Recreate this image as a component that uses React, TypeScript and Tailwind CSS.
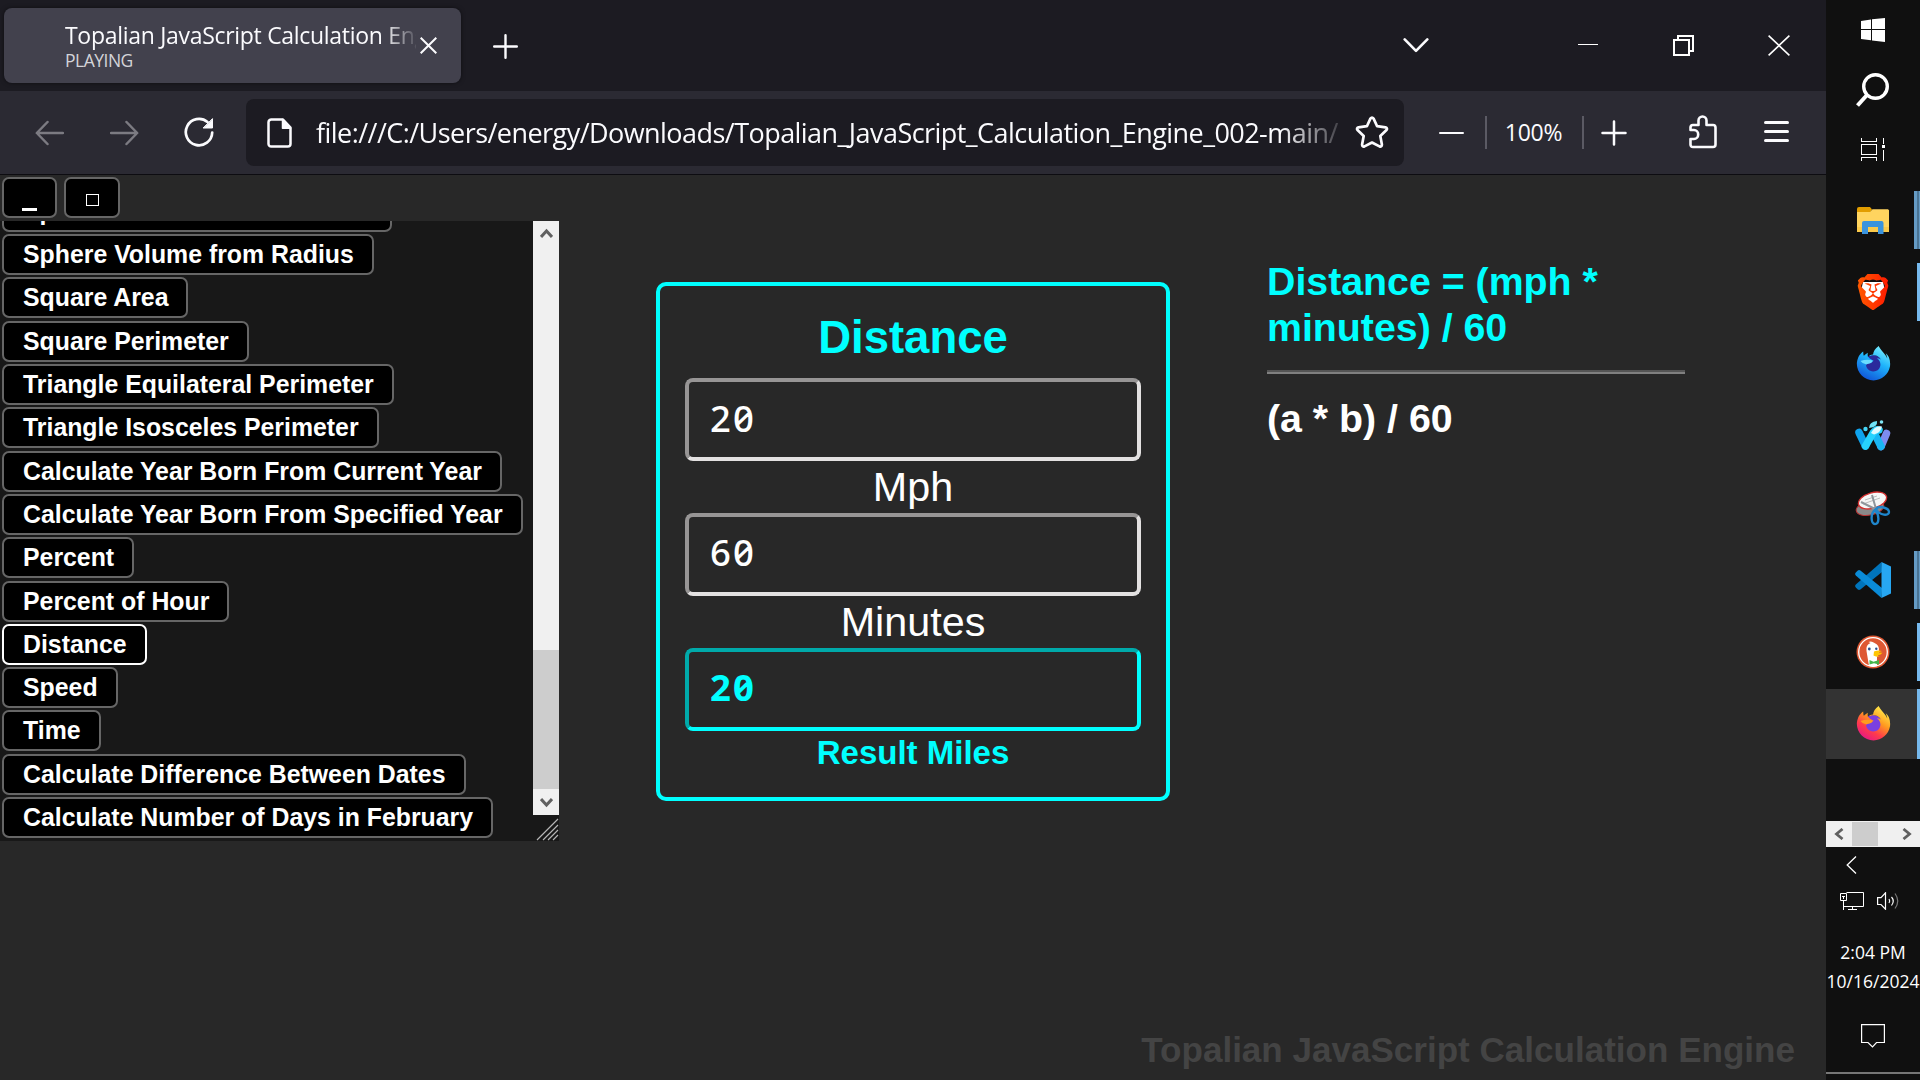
import type { ReactNode } from "react";
import { FaFirefoxBrowser } from "react-icons/fa";
import { SiBrave } from "react-icons/si";

const calculators = [
  "Sphere Diameter from Radius",
  "Sphere Volume from Radius",
  "Square Area",
  "Square Perimeter",
  "Triangle Equilateral Perimeter",
  "Triangle Isosceles Perimeter",
  "Calculate Year Born From Current Year",
  "Calculate Year Born From Specified Year",
  "Percent",
  "Percent of Hour",
  "Distance",
  "Speed",
  "Time",
  "Calculate Difference Between Dates",
  "Calculate Number of Days in February",
];

const ui = "font-['Open_Sans','Noto_Sans',sans-serif]";

function TabStrip() {
  return (
    <div className="flex h-[91px] shrink-0 items-start bg-[#1c1b22] text-[#fbfbfe]">
      <div className="mt-2 ml-1 flex h-[75px] w-[457px] rounded-[8px] bg-[#42414d] shadow-[0_0_4px_rgba(0,0,0,0.5)]">
        <div className="mt-[12px] ml-[61px] w-[351px] overflow-hidden whitespace-nowrap">
          <div className="[mask-image:linear-gradient(to_right,black_318px,transparent_354px)] text-[23px] leading-[30px] tracking-[-0.3px]">
            Topalian JavaScript Calculation Engine
          </div>
          <div className="text-[17.5px] leading-[20px] tracking-[-0.5px] text-[#d4d4d9]">PLAYING</div>
        </div>
        <svg className="mt-[29px] ml-[4px]" width="17" height="17" viewBox="0 0 17 17" fill="none" stroke="#fbfbfe" strokeWidth="2">
          <path d="M.7.7l15.6 15.6M16.3.7L.7 16.3" />
        </svg>
      </div>
      <svg className="mt-[34px] ml-[32px]" width="25" height="25" viewBox="0 0 25 25" fill="none" stroke="#fbfbfe" strokeWidth="2.4" strokeLinecap="round">
        <path d="M12.5 1.2v22.6M1.2 12.5h22.6" />
      </svg>
      <svg className="mt-[37px] ml-auto" width="26" height="16" viewBox="0 0 26 16" fill="none" stroke="#fbfbfe" strokeWidth="2.6" strokeLinecap="round" strokeLinejoin="round">
        <path d="M1.7 2.4L13 13.9 24.3 2.4" />
      </svg>
      <div className="mt-[44px] ml-[149px] h-px w-5 bg-white" />
      <svg className="mt-[35px] ml-[75px]" width="21" height="21" viewBox="0 0 21 21" fill="none" stroke="#fff" strokeWidth="2">
        <path d="M1 5h15v15H1zM5 5V1h15v15h-4" />
      </svg>
      <svg className="mt-[35px] mr-[36px] ml-[74px]" width="22" height="21" viewBox="0 0 22 21" fill="none" stroke="#fff" strokeWidth="1.6">
        <path d="M.6.6l20.8 19.8M21.4.6L.6 20.4" />
      </svg>
    </div>
  );
}

function Toolbar() {
  return (
    <div className="flex h-[84px] shrink-0 items-center border-b border-[#0d0c11] bg-[#2b2a33]">
      <svg className="ml-[35px]" width="29" height="26" viewBox="0 0 29 26" fill="none" stroke="#7c7b82" strokeWidth="2.5" strokeLinecap="round" strokeLinejoin="round">
        <path d="M28 13H2M12.5 2L1.8 13l10.7 11" />
      </svg>
      <svg className="ml-[46px]" width="29" height="26" viewBox="0 0 29 26" fill="none" stroke="#7c7b82" strokeWidth="2.5" strokeLinecap="round" strokeLinejoin="round">
        <path d="M1 13h26M16.5 2l10.7 11-10.7 11" />
      </svg>
      <svg className="-mt-[1px] ml-[45px]" width="30" height="30" viewBox="0 0 30 30" fill="none" stroke="#fbfbfe" strokeWidth="2.7" strokeLinecap="round">
        <path d="M28.2 15.5A13.2 13.2 0 1 1 23.5 5" />
        <path d="M28.5 2v9h-9z" fill="#fbfbfe" strokeWidth="1" strokeLinejoin="round" />
      </svg>
      <div className="ml-[32px] flex h-[67px] w-[1158px] items-center rounded-[8px] bg-[#1c1b22]">
        <svg className="ml-[21px]" width="25" height="30" viewBox="0 0 25 30" fill="none" stroke="#fbfbfe" strokeWidth="2.5" strokeLinejoin="round">
          <path d="M4.5 1.5H16l7.5 8V26a2.7 2.7 0 0 1-2.7 2.6H4.3A2.7 2.7 0 0 1 1.5 26V4.3a2.8 2.8 0 0 1 3-2.8z" />
          <path d="M15.5 1.5v8.8h8z" fill="#fbfbfe" strokeWidth="1.5" />
        </svg>
        <div className="ml-[24px] w-[1028px] overflow-hidden [mask-image:linear-gradient(to_right,black_965px,transparent_1035px)] text-[27px] leading-[40px] tracking-[-0.55px] whitespace-nowrap text-[#fbfbfe]">
          file:///C:/Users/energy/Downloads/Topalian_JavaScript_Calculation_Engine_002-main/
        </div>
        <svg className="ml-[11px]" width="34" height="33" viewBox="0 0 34 33" fill="none" stroke="#fbfbfe" strokeWidth="2.7" strokeLinejoin="round">
          <path d="M15.4 2.6q1.6-2 3.2 0l3.5 7.6 8.4 1.1q2.4.7 1 2.8l-6.2 5.9 1.6 8.5q0 2.6-2.4 1.9L17 26.5l-7.5 3.9q-2.4.7-2.4-1.9L8.7 20 2.5 14.1q-1.4-2.1 1-2.8l8.4-1.1z" />
        </svg>
      </div>
      <div className="mt-[1px] ml-[35px] h-[2.5px] w-[25px] rounded bg-[#fbfbfe]" />
      <div className="ml-[21px] h-[33px] w-[2px] bg-[#5b5a64]" />
      <div className="w-[95px] pr-[2px] pb-[2px] text-center text-[23px] leading-[30px] tracking-[-0.3px] text-[#fbfbfe]">100%</div>
      <div className="h-[33px] w-[2px] bg-[#5b5a64]" />
      <svg className="mt-[1px] ml-[17px]" width="26" height="26" viewBox="0 0 26 26" fill="none" stroke="#fbfbfe" strokeWidth="2.5" strokeLinecap="round">
        <path d="M13 1.5v23M1.5 13h23" />
      </svg>
      <svg className="-mt-[1px] ml-[62px]" width="28" height="34" viewBox="0 0 28 34" fill="none" stroke="#fbfbfe" strokeWidth="2.6" strokeLinejoin="round">
        <path d="M1.5 15V12.5q0-2.500 2.500-2.500H9.500V5.500a4 4 0 0 1 8 0V10H24q2.500 0 2.500 2.500V29.500q0 2.500-2.500 2.500H4q-2.500 0-2.500-2.500V24H5a4.200 4.500 0 0 0 0-9z" />
      </svg>
      <div className="-mt-[2px] ml-[47px] flex w-[25px] flex-col gap-[6.5px]">
        <div className="h-[2.5px] rounded bg-[#fbfbfe]" />
        <div className="h-[2.5px] rounded bg-[#fbfbfe]" />
        <div className="h-[2.5px] rounded bg-[#fbfbfe]" />
      </div>
    </div>
  );
}

function CalculatorList() {
  return (
    <div className="relative flex h-[620px] w-[559px] overflow-hidden bg-[#181818]">
      <div className="flex min-w-0 flex-1 flex-col items-start justify-end gap-[2.3px] pb-[3px] pl-[2px]">
        {calculators.map((name) => (
          <button
            key={name}
            className={
              "flex h-[41px] shrink-0 items-center rounded-[7px] border-2 bg-black pt-[1px] pr-[18px] pl-[19px] text-[24.85px] leading-[28px] font-bold whitespace-nowrap text-white " +
              (name === "Distance" ? "border-white" : "border-[#666]")
            }
          >
            {name}
          </button>
        ))}
      </div>
      <div className="flex h-[594px] w-[26px] flex-col items-center bg-[#f0f0f0]">
        <svg className="mt-[7px]" width="13" height="11" viewBox="0 0 13 11" fill="none" stroke="#606060" strokeWidth="3">
          <path d="M1 9l5.500-6L12 9" />
        </svg>
        <div className="mt-[411px] h-[139px] w-full bg-[#cdcdcd]" />
        <svg className="mt-[8px]" width="13" height="11" viewBox="0 0 13 11" fill="none" stroke="#606060" strokeWidth="3">
          <path d="M1 2l5.500 6L12 2" />
        </svg>
      </div>
      <svg className="absolute right-0 bottom-0" width="23" height="23" viewBox="0 0 23 23" fill="none" stroke="#b5b5b5" strokeWidth="1.2">
        <path d="M1 22L22 1M7 22L22 7M12 22L22 12M17 22l5-5" />
      </svg>
    </div>
  );
}

function Field({ value, kind }: { value: string; kind: "first" | "second" | "result" }) {
  return (
    <div
      className={
        "flex h-[83px] items-center rounded-[8px] border-4 pl-[21px] font-['Noto_Sans',sans-serif] text-[36.5px] leading-[48px] tracking-[2px] slashed-zero " +
        (kind === "first" ? "pb-[3px] " : "pb-[5px] ") +
        (kind === "result"
          ? "border-t-[#00aaaa] border-r-[#00ffff] border-b-[#00ffff] border-l-[#00aaaa] font-bold text-[#00ffff]"
          : "border-t-[#979595] border-r-[#e3e1e1] border-b-[#e3e1e1] border-l-[#979595] font-medium text-white")
      }
    >
      {value}
    </div>
  );
}

function DistanceCard() {
  return (
    <div className="mt-[107px] ml-[97px] h-[519px] w-[514px] rounded-[10px] border-4 border-[#00ffff] px-[25px] text-center">
      <div className="mt-[26px] h-[66px] text-[45.5px] leading-[52px] font-bold text-[#00ffff]">Distance</div>
      <Field value="20" kind="first" />
      <div className="h-[52px] text-[41.3px] leading-[53px] text-white">Mph</div>
      <Field value="60" kind="second" />
      <div className="h-[52px] text-[41.3px] leading-[53px] text-white">Minutes</div>
      <Field value="20" kind="result" />
      <div className="text-[33px] leading-[43px] font-bold text-[#00ffff]">Result Miles</div>
    </div>
  );
}

function Page() {
  return (
    <div className="flex flex-1 flex-col bg-[#282828] font-['Liberation_Sans',Arial,sans-serif]">
      <div className="flex flex-1">
        <div className="w-[559px] shrink-0">
          <div className="flex h-[46px] items-start gap-[7px] pt-[2px] pl-[2px]">
            <button className="flex h-[41px] w-[55px] items-end justify-center rounded-[7px] border-2 border-[#666] bg-black pb-[5px]">
              <span className="h-[3px] w-[15px] bg-white" />
            </button>
            <button className="flex h-[41px] w-[56px] items-center justify-center rounded-[7px] border-2 border-[#666] bg-black pt-[4px]">
              <span className="h-[12px] w-[13px] border border-white" />
            </button>
          </div>
          <CalculatorList />
        </div>
        <DistanceCard />
        <div className="mt-[83px] ml-[97px] w-[418px] text-[39.3px] leading-[46px] font-bold">
          <div className="text-[#00ffff]">Distance = (mph * minutes) / 60</div>
          <div className="mt-[20px] h-[4px] border-t-2 border-b-2 border-t-[#555] border-b-[#808080]" />
          <div className="mt-[21px] text-white">(a * b) / 60</div>
        </div>
      </div>
      <div className="mb-[9px] pr-[31px] text-right text-[35.05px] leading-[42px] font-bold text-[#444]">
        Topalian JavaScript Calculation Engine
      </div>
    </div>
  );
}

function TaskItem({ children, mark }: { children: ReactNode; mark?: "one" | "many" | "active" }) {
  return (
    <div className={"flex h-[70px] w-[94px] shrink-0 items-center " + (mark === "active" ? "bg-[#333]" : "")}>
      <div className="ml-[28px] flex h-[38px] w-[38px] items-center justify-center">{children}</div>
      {mark === "one" && <div className="ml-auto h-[58px] w-[3px] bg-[#76b9ed]" />}
      {mark === "active" && <div className="ml-auto h-[70px] w-[3px] bg-[#76b9ed]" />}
      {mark === "many" && <div className="ml-auto h-[58px] w-[6px] border-r border-l-[3px] border-[#659bc5] bg-[#4a7393]" />}
    </div>
  );
}

function Folder() {
  return (
    <svg width="32" height="27" viewBox="0 0 32 27">
      <path d="M0 2Q0 0 2 0h11l2 2.500L13 6H0z" fill="#e29d00" />
      <path d="M0 5h13l2.500-2.800H31l1 1V25H0z" fill="#ffd45f" />
      <path d="M0 20h32v5H0z" fill="#fac94a" />
      <path d="M5 27V16q0-2 2-2h17.500q2 0 2 2v11H21v-7H11v7z" fill="#3a93dd" />
    </svg>
  );
}

function Brave() {
  return (
    <div className="relative h-[36px] w-[36px]">
      <svg className="absolute inset-0" width="36" height="36" viewBox="0 0 36 36">
        <path d="M8 8h20l2 9-5 11-7 5-7-5-5-11z" fill="#fff" />
        <defs>
          <linearGradient id="brave">
            <stop offset="0" stopColor="#ff5a00" />
            <stop offset="1" stopColor="#ff1a00" />
          </linearGradient>
        </defs>
      </svg>
      <SiBrave className="absolute inset-0" size={36} fill="url(#brave)" />
    </div>
  );
}

function FirefoxDev() {
  return (
    <div className="relative mb-[2px] h-[35px] w-[35px]">
      <svg className="absolute inset-0" width="35" height="35" viewBox="0 0 35 35">
        <defs>
          <linearGradient id="devGlow" x1="0.8" y1="0" x2="0.3" y2="1">
            <stop offset="0" stopColor="#7ff3ff" />
            <stop offset="0.45" stopColor="#1fb4fb" />
            <stop offset="1" stopColor="#1053d8" />
          </linearGradient>
        </defs>
        <circle cx="17" cy="19" r="10" fill="#2a2a9c" />
      </svg>
      <FaFirefoxBrowser className="absolute inset-0" size={35} fill="url(#devGlow)" />
      <svg className="absolute inset-0" width="35" height="35" viewBox="0 0 35 35">
        <path d="M4.500 15q6-2 12-.500 0 2.500-5 3.500-4 1-7-3z" fill="#69dcff" />
      </svg>
    </div>
  );
}

function Firefox() {
  return (
    <div className="relative mb-[2px] h-[35px] w-[35px]">
      <svg className="absolute inset-0" width="35" height="35" viewBox="0 0 35 35">
        <defs>
          <linearGradient id="foxGlow" x1="0.85" y1="0.05" x2="0.25" y2="1">
            <stop offset="0" stopColor="#fff44f" />
            <stop offset="0.4" stopColor="#ff9a1f" />
            <stop offset="0.7" stopColor="#ff3b4b" />
            <stop offset="1" stopColor="#e3158a" />
          </linearGradient>
        </defs>
        <circle cx="17" cy="19" r="10" fill="#7a3fe0" />
      </svg>
      <FaFirefoxBrowser className="absolute inset-0" size={35} fill="url(#foxGlow)" />
      <svg className="absolute inset-0" width="35" height="35" viewBox="0 0 35 35">
        <path d="M4.500 15q6-2 12-.500 0 2.500-5 3.500-4 1-7-3z" fill="#ff9d1f" />
      </svg>
    </div>
  );
}

function Waterfox() {
  return (
    <svg width="38" height="34" viewBox="0 0 38 34" fill="none" strokeLinecap="round" strokeLinejoin="round" strokeWidth="7.5">
      <path d="M32.500 14.500L27 27.500" stroke="#7d8cf0" />
      <path d="M20.500 14.500L27 27.500" stroke="#19b6f4" />
      <path d="M5 13.500L11.500 27" stroke="#0fa3ee" />
      <path d="M11.500 27L19 14q3-4 6-3" stroke="#27d3ff" />
      <path d="M17 14q4-8 11-6.500-1 6-8 8z" fill="#dffaff" />
      <path d="M15 9q0-6 8-7 1 6-8 7z" fill="#6fe3f7" />
      <circle cx="27.5" cy="3" r="1.8" fill="#7fe6f5" />
      <circle cx="11.5" cy="10" r="2.2" fill="#46d5f5" />
    </svg>
  );
}

function Snip() {
  return (
    <svg width="36" height="36" viewBox="0 0 36 36" fill="none">
      <ellipse cx="15" cy="18" rx="14" ry="7" transform="rotate(-12 15 18)" fill="#8a8a8a" stroke="#b33" strokeWidth="1" />
      <ellipse cx="17.5" cy="10.5" rx="14.5" ry="7.8" transform="rotate(-16 17.5 10.5)" fill="#f6f6f6" stroke="#d32f2f" strokeWidth="1.3" />
      <path d="M8 14l17-6M10 10l12-4" stroke="#bbb" />
      <path d="M17 5l4 14M6 12l14 7" stroke="#8f959b" strokeWidth="2" />
      <path d="M20 20c-5 4-4 14 0 14s5-8 0-14zM21 19c3-4 13-1 13 3s-9 4-13-3z" stroke="#1f86cc" strokeWidth="2.4" />
    </svg>
  );
}

function VsCode() {
  return (
    <svg width="36" height="36" viewBox="0 0 36 36">
      <path d="M26.500 0L.8 22.500q-1.300 1.500 0 3l2 2q1.200.9 2.600 0L27 10z" fill="#0074bb" />
      <path d="M26.500 36L.8 13.500q-1.300-1.500 0-3l2-2q1.200-.9 2.600 0L27 26z" fill="#0a8bd8" />
      <path d="M26.500 0L36 4.500v27L26.500 36z" fill="#27a7f2" />
    </svg>
  );
}

function Duck() {
  return (
    <svg width="34" height="34" viewBox="0 0 34 34">
      <circle cx="17" cy="17" r="16.5" fill="#de5833" />
      <circle cx="17" cy="17" r="14.3" fill="none" stroke="#fff" strokeWidth="1.3" />
      <path d="M13 31L10.500 16q-1-6 4-8l-2-1q3-1.500 6 1 5 2 4.500 8l-2 6v9.300q-4 1-8-.3z" fill="#fff" />
      <path d="M18 16.500q4-1.500 8-.5l-4 1.500 4.500.2q-2 2.500-5.500 2.800l3 .7q-4 1.200-6.500-.7z" fill="#ffc600" />
      <circle cx="13.3" cy="14" r="1.4" fill="#2d4f8e" />
      <circle cx="20.3" cy="13.7" r="1.2" fill="#2d4f8e" />
      <path d="M13.500 25l4 1.800L23 25v4.500l-5-1.200-4.500 1.200z" fill="#45b54a" />
    </svg>
  );
}

function Taskbar() {
  return (
    <div className={"flex w-[94px] shrink-0 flex-col overflow-hidden bg-[#101010] " + ui}>
      <svg className="mt-[18px] ml-[35px] shrink-0" width="24" height="24" viewBox="0 0 24 24" fill="#fff">
        <path d="M0 3l10-1.500V11H0zM11 1.300L24 0v11H11zM0 12h10v10.300L0 21zM11 12h13v12l-13-1.600z" />
      </svg>
      <svg className="mt-[31px] ml-[30px] shrink-0" width="34" height="34" viewBox="0 0 34 34" fill="none" stroke="#fff" strokeWidth="3.4">
        <circle cx="19.5" cy="13.5" r="11.8" />
        <path d="M11 22L1.500 32.500" strokeWidth="4" />
      </svg>
      <svg className="mt-[31px] mb-[24px] ml-[35px] shrink-0" width="24" height="23" viewBox="0 0 24 23" fill="none" stroke="#fff" shapeRendering="crispEdges">
        <path d="M.5 0v3.500h15V0M.5 6.500h15v10H.5zM.5 23v-3.500h15V23M22.500 0v6M22.500 12v11" />
        <path d="M21 7h3v3h-3z" fill="#fff" stroke="none" />
      </svg>
      <div className="flex flex-col gap-[2px]">
        <TaskItem mark="many"><Folder /></TaskItem>
        <TaskItem mark="one"><Brave /></TaskItem>
        <TaskItem><FirefoxDev /></TaskItem>
        <TaskItem><Waterfox /></TaskItem>
        <TaskItem><Snip /></TaskItem>
        <TaskItem mark="many"><VsCode /></TaskItem>
        <TaskItem mark="one"><Duck /></TaskItem>
        <TaskItem mark="active"><Firefox /></TaskItem>
      </div>
      <div className="mt-[62px] flex h-[26px] shrink-0 items-center bg-[#f0f0f0]">
        <svg className="ml-[8px]" width="10" height="12" viewBox="0 0 10 12" fill="none" stroke="#606060" strokeWidth="2.8">
          <path d="M8.500 1L2.500 6l6 5" />
        </svg>
        <div className="ml-[8px] h-[24px] w-[26px] bg-[#cdcdcd]" />
        <svg className="ml-[24px]" width="10" height="12" viewBox="0 0 10 12" fill="none" stroke="#606060" strokeWidth="2.8">
          <path d="M1.500 1l6 5-6 5" />
        </svg>
      </div>
      <svg className="mt-[9px] ml-[20px] shrink-0" width="11" height="18" viewBox="0 0 11 18" fill="none" stroke="#fff" strokeWidth="1.3">
        <path d="M10 .5L1.200 9l8.800 8.500" />
      </svg>
      <div className="mt-[18px] ml-[14px] flex shrink-0 items-start">
        <svg width="24" height="18" viewBox="0 0 24 18" fill="none" stroke="#fff">
          <path d="M6.500.5h17v14H3.500M.5 1.500h6v7h-6zM3.500 8.500V18M12.500 14.500v3M8 17.500h9M2 4.500h3M3.500 4v3" />
        </svg>
        <svg className="ml-[13px]" width="23" height="18" viewBox="0 0 23 18" fill="none" stroke="#fff" strokeWidth="1.2">
          <path d="M.6 5.600H4L8.500.8v16.400L4 12.500H.6z" />
          <path d="M12 7q1.500 2 0 4M14.500 5q3.500 4 0 8.500" />
          <path d="M18 1.500q5.500 7.500 0 15" stroke="#777" />
        </svg>
      </div>
      <div className="mt-[28px] flex shrink-0 flex-col items-center text-[17.5px] leading-[29px] text-white">
        <div className="whitespace-nowrap">2:04 PM</div>
        <div className="whitespace-nowrap">10/16/2024</div>
      </div>
      <svg className="mt-[28px] ml-[35px] shrink-0" width="24" height="25" viewBox="0 0 24 25" fill="none" stroke="#fff" strokeWidth="1.2">
        <path d="M.6.6h22.800v17.900H15.500L11.500 23 7 18.500H.6z" />
      </svg>
      <div className="mt-auto mb-[6px] h-[2px] shrink-0 bg-[#777]" />
    </div>
  );
}

export default function App() {
  return (
    <div className="flex h-[1080px] w-[1920px] overflow-hidden bg-[#101010]">
      <div className={"flex w-[1826px] shrink-0 flex-col " + ui}>
        <TabStrip />
        <Toolbar />
        <Page />
      </div>
      <Taskbar />
    </div>
  );
}
